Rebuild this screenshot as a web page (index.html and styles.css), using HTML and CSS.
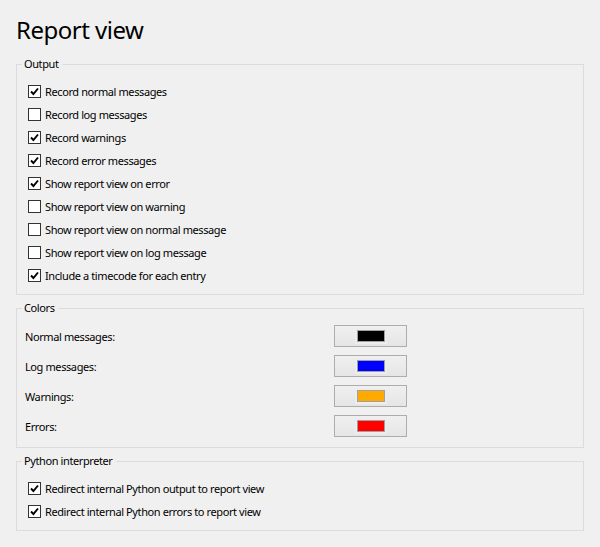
FILE: index.html
```html
<!DOCTYPE html>
<html>
<head>
<meta charset="utf-8">
<link rel="stylesheet" href="styles.css">
</head>
<body>
<h1 class="title">Report view</h1>

<fieldset class="group">
  <legend class="group-title">Output</legend>
  <div class="check-row"><span class="box checked"></span><span class="label">Record normal messages</span></div>
  <div class="check-row"><span class="box"></span><span class="label">Record log messages</span></div>
  <div class="check-row"><span class="box checked"></span><span class="label">Record warnings</span></div>
  <div class="check-row"><span class="box checked"></span><span class="label">Record error messages</span></div>
  <div class="check-row"><span class="box checked"></span><span class="label">Show report view on error</span></div>
  <div class="check-row"><span class="box"></span><span class="label">Show report view on warning</span></div>
  <div class="check-row"><span class="box"></span><span class="label">Show report view on normal message</span></div>
  <div class="check-row"><span class="box"></span><span class="label">Show report view on log message</span></div>
  <div class="check-row"><span class="box checked"></span><span class="label">Include a timecode for each entry</span></div>
</fieldset>

<fieldset class="group colors">
  <legend class="group-title">Colors</legend>
  <div class="color-row"><span class="label">Normal messages:</span><button class="color-btn"><span class="swatch-wrap"><span class="swatch" style="background:#000000"></span></span></button></div>
  <div class="color-row"><span class="label">Log messages:</span><button class="color-btn"><span class="swatch-wrap"><span class="swatch" style="background:#0000ff"></span></span></button></div>
  <div class="color-row"><span class="label">Warnings:</span><button class="color-btn"><span class="swatch-wrap"><span class="swatch" style="background:#ffaa00"></span></span></button></div>
  <div class="color-row"><span class="label">Errors:</span><button class="color-btn"><span class="swatch-wrap"><span class="swatch" style="background:#ff0000"></span></span></button></div>
</fieldset>

<fieldset class="group">
  <legend class="group-title">Python interpreter</legend>
  <div class="check-row"><span class="box checked"></span><span class="label">Redirect internal Python output to report view</span></div>
  <div class="check-row"><span class="box checked"></span><span class="label">Redirect internal Python errors to report view</span></div>
</fieldset>
</body>
</html>
```

FILE: styles.css
```css
html, body {
  margin: 0;
  padding: 0;
  background: #f0f0f0;
}
body {
  padding: 12px 16px 0 16px;
  font-family: "Noto Sans", "Open Sans", sans-serif;
  font-size: 11px;
  letter-spacing: -0.4px;
  color: #000;
}
.title {
  margin: 0 0 8px 0;
  font-size: 24px;
  letter-spacing: -0.5px;
  line-height: 36px;
  font-weight: 400;
  height: 36px;
}
.group {
  margin: 0 0 5px 0;
  border: 1px solid #dcdcdc;
  padding: 8px 0 7px 5px;
  min-width: 0;
}
.group-title {
  padding: 0 3px 0 2px;
  line-height: 16px;
  height: 16px;
}
.check-row {
  display: flex;
  align-items: center;
  height: 23px;
  padding-left: 6px;
}
.box {
  width: 11px;
  height: 11px;
  border: 1px solid #333333;
  background: #ffffff;
  margin-right: 4px;
  position: relative;
  flex: none;
}
.box.checked::after {
  content: "";
  position: absolute;
  left: 1px;
  top: 1px;
  width: 9px;
  height: 9px;
  background: no-repeat center / 9px 9px url("data:image/svg+xml;utf8,<svg xmlns='http://www.w3.org/2000/svg' viewBox='0 0 9 9'><path d='M1 4.5 L3.4 7 L8 1.5' fill='none' stroke='black' stroke-width='1.9'/></svg>");
}
.label {
  white-space: nowrap;
}
.colors {
  padding-top: 9px;
  padding-bottom: 10px;
  display: grid;
  grid-template-columns: 312px 73px;
  row-gap: 8px;
}
.color-row {
  display: contents;
}
.color-row .label {
  padding-left: 3px;
  align-self: center;
}
.color-btn {
  width: 73px;
  height: 22px;
  margin: 0;
  padding: 0;
  border: 1px solid #adadad;
  background: linear-gradient(#f0f0f0, #e5e5e5);
  display: flex;
  align-items: center;
  justify-content: center;
}
.swatch-wrap {
  padding: 2px;
  background: #ededed;
  display: block;
}
.swatch {
  display: block;
  width: 26px;
  height: 10px;
  border: 1px solid #a0a0a0;
}
```
